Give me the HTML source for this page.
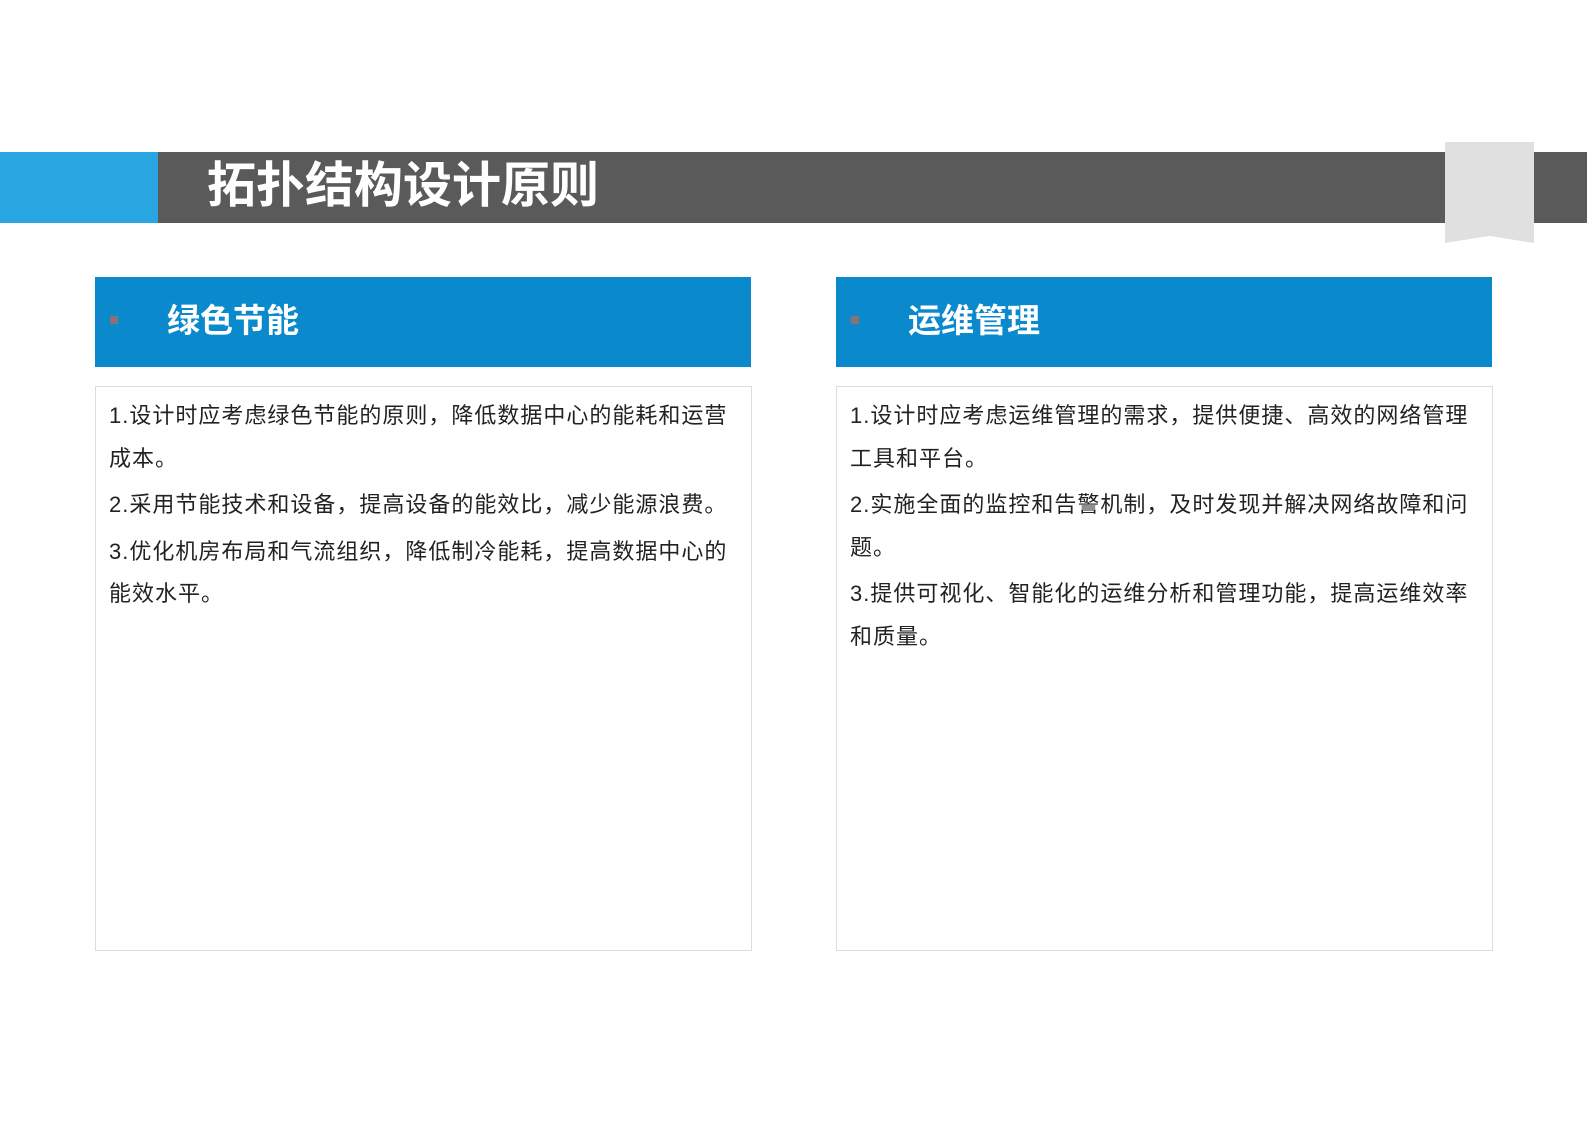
<!DOCTYPE html>
<html><head><meta charset="utf-8"><style>
body{margin:0;width:1587px;height:1122px;background:#fff;position:relative;overflow:hidden;font-family:"Liberation Sans","Noto Sans CJK SC",sans-serif}
.bar{position:absolute;left:0;top:152px;width:1587px;height:71px;background:#5a5a5a}
.blue{position:absolute;left:0;top:152px;width:158px;height:71px;background:#29a5e2}
.title{position:absolute;left:207px;top:152px;height:71px;line-height:68px;color:#fff;font-size:49px;font-weight:bold;letter-spacing:0}
.rib{position:absolute;left:1445px;top:142px;width:89px;height:101px;background:#e0e0e0;clip-path:polygon(0 0,100% 0,100% 100%,50% 93%,0 100%);filter:drop-shadow(0 2px 2px rgba(0,0,0,.3))}
.hd{position:absolute;top:277px;width:656px;height:90px;background:#0a8acc}
.hd span{position:absolute;left:72px;top:0;line-height:88px;color:#fff;font-size:33px;font-weight:bold}
.hd i{position:absolute;left:15px;top:39px;width:8px;height:8px;background:#8a7272}
.bd{position:absolute;top:386px;width:655px;height:563px;border:1px solid #ddd}
.bd p{margin:0 0 4px;padding:0 13px;font-size:22px;line-height:42.5px;color:#222;letter-spacing:1px;white-space:nowrap}
.bd div{padding-top:8px}
</style></head><body>
<div class="bar"></div><div class="blue"></div>
<div class="title">拓扑结构设计原则</div>
<div class="rib"></div>
<div class="hd" style="left:95px"><i></i><span>绿色节能</span></div>
<div class="hd" style="left:836px"><i></i><span>运维管理</span></div>
<div class="bd" style="left:95px"><div>
<p>1.设计时应考虑绿色节能的原则，降低数据中心的能耗和运营<br>成本。</p>
<p>2.采用节能技术和设备，提高设备的能效比，减少能源浪费。</p>
<p>3.优化机房布局和气流组织，降低制冷能耗，提高数据中心的<br>能效水平。</p>
</div></div>
<div class="bd" style="left:836px"><div>
<p>1.设计时应考虑运维管理的需求，提供便捷、高效的网络管理<br>工具和平台。</p>
<p>2.实施全面的监控和告警机制，及时发现并解决网络故障和问<br>题。</p>
<p>3.提供可视化、智能化的运维分析和管理功能，提高运维效率<br>和质量。</p>
</div></div>
</body></html>
